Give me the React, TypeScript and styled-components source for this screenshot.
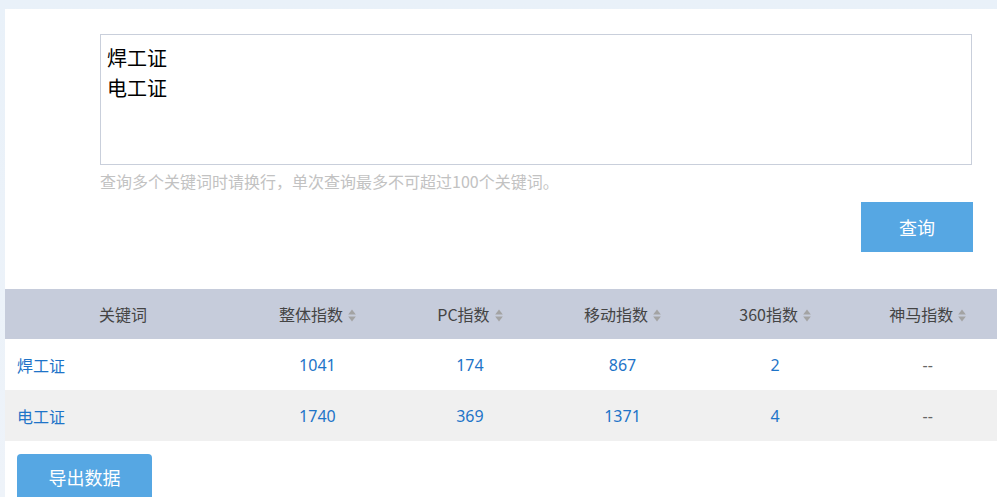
import React from 'react';
import styled, { createGlobalStyle } from 'styled-components';

interface Row {
  keyword: string;
  total: string;
  pc: string;
  mobile: string;
  so360: string;
  shenma: string;
}

const rows: Array<Row> = [
  { keyword: '焊工证', total: '1041', pc: '174', mobile: '867', so360: '2', shenma: '--' },
  { keyword: '电工证', total: '1740', pc: '369', mobile: '1371', so360: '4', shenma: '--' },
];

const columns = ['整体指数', 'PC指数', '移动指数', '360指数', '神马指数'];

const SortIcon = () => (
  <SortSvg width="8" height="13" viewBox="0 0 8 13">
    <path d="M4 0.5 L7.8 5.5 H0.2 Z" fill="#a3a3a3" />
    <path d="M4 12.5 L7.8 7.5 H0.2 Z" fill="#a3a3a3" />
  </SortSvg>
);

const App = () => {
  return (
    <Page>
      <GlobalStyle />
      <Panel>
        <SearchForm>
          <KeywordInput defaultValue={'焊工证\n电工证'} spellCheck={false} />
          <Hint>查询多个关键词时请换行，单次查询最多不可超过100个关键词。</Hint>
          <ButtonRow>
            <QueryButton>查询</QueryButton>
          </ButtonRow>
        </SearchForm>
        <Table>
          <colgroup>
            <col style={{ width: '236px' }} />
            {columns.map((c) => (
              <col key={c} style={{ width: '152.5px' }} />
            ))}
          </colgroup>
          <thead>
            <tr>
              <Th>关键词</Th>
              {columns.map((c) => (
                <Th key={c}>
                  {c}
                  <SortIcon />
                </Th>
              ))}
            </tr>
          </thead>
          <tbody>
            {rows.map((r, i) => (
              <Tr key={r.keyword} striped={i % 2 === 1}>
                <KeywordCell>{r.keyword}</KeywordCell>
                <Td>{r.total}</Td>
                <Td>{r.pc}</Td>
                <Td>{r.mobile}</Td>
                <Td>{r.so360}</Td>
                <Td muted={r.shenma === '--'}>{r.shenma}</Td>
              </Tr>
            ))}
          </tbody>
        </Table>
        <ExportButton>导出数据</ExportButton>
      </Panel>
    </Page>
  );
};

export default App;

const GlobalStyle = createGlobalStyle`
  html, body {
    margin: 0;
    padding: 0;
    background: #ebf2f9;
    font-family: "Microsoft YaHei", "Noto Sans CJK SC", "Noto Sans", sans-serif;
    overflow: hidden;
  }
`;

const Page = styled.div`
  width: 997px;
  height: 497px;
  padding: 9px 0 0 5px;
  box-sizing: border-box;
  background: linear-gradient(#e9f1f9, #eef3f9);
  overflow: hidden;
`;

const Panel = styled.div`
  background: #fff;
  height: 100%;
  overflow: hidden;
`;

const SearchForm = styled.div`
  padding: 25px 20px 37px 95px;
`;

const KeywordInput = styled.textarea`
  display: block;
  box-sizing: border-box;
  width: 872px;
  height: 131px;
  margin: 0;
  padding: 8px 6px;
  border: 1px solid #c9cfdb;
  font-family: inherit;
  font-size: 20px;
  line-height: 30px;
  color: #000;
  resize: none;
  outline: none;
  caret-color: #d00;
`;

const Hint = styled.div`
  margin-top: 5px;
  font-size: 16px;
  line-height: 22px;
  color: #c2c2c2;
`;

const ButtonRow = styled.div`
  display: flex;
  justify-content: flex-end;
  width: 872px;
  margin-top: 10px;
`;

const QueryButton = styled.button`
  width: 112px;
  height: 50px;
  margin-right: -1px;
  border: 0;
  background: #56a7e3;
  color: #fff;
  font-family: inherit;
  font-size: 18px;
  cursor: pointer;
`;

const Table = styled.table`
  width: 999px;
  border-collapse: collapse;
  table-layout: fixed;
`;

const Th = styled.th`
  height: 50px;
  padding: 0;
  background: #c6ccdb;
  color: #444;
  font-size: 16px;
  font-weight: normal;
  text-align: center;
  white-space: nowrap;
`;

const SortSvg = styled.svg`
  margin-left: 5px;
  vertical-align: -1px;
`;

const Tr = styled.tr<{ striped?: boolean }>`
  background: ${(p) => (p.striped ? '#f0f0f0' : '#fff')};
`;

const Td = styled.td<{ muted?: boolean }>`
  height: 51px;
  padding: 0;
  text-align: center;
  font-size: 16px;
  color: ${(p) => (p.muted ? '#666' : '#1e74c8')};
  font-family: "Segoe UI", "Noto Sans", "Noto Sans CJK SC", sans-serif;
`;

const KeywordCell = styled(Td)`
  text-align: left;
  padding-left: 12px;
  font-family: "Microsoft YaHei", "Noto Sans CJK SC", sans-serif;
`;

const ExportButton = styled.button`
  display: block;
  width: 135px;
  height: 46px;
  margin: 13px 0 0 12px;
  border: 0;
  border-radius: 4px;
  background: #56a7e3;
  color: #fff;
  font-family: inherit;
  font-size: 18px;
  cursor: pointer;
`;
